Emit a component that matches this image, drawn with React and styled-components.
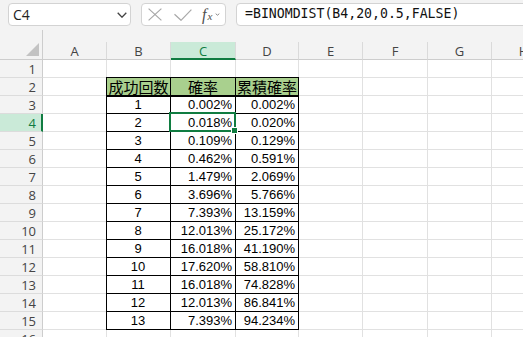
import React from "react";
import styled, { createGlobalStyle } from "styled-components";

const GlobalStyle = createGlobalStyle`
  html, body { margin: 0; padding: 0; overflow: hidden; background: #fff; }
  * { box-sizing: border-box; }
`;

const GREEN = "#107c41";
const SEL_BG = "#caead8";
const HEAD_BG = "#f3f3f3";
const GRID = "#e1e1e1";

const Window = styled.div`
  width: 523px;
  height: 337px;
  overflow: hidden;
  background: ${HEAD_BG};
  display: flex;
  flex-direction: column;
`;

const FormulaRow = styled.div`
  display: flex;
  align-items: flex-start;
  height: 30px;
  flex: 0 0 30px;
  padding: 3px 0 0 8px;
  gap: 10px;
`;

const Box = styled.div`
  height: 23px;
  background: #fff;
  border: 1px solid #d3d3d3;
  border-radius: 4px;
  display: flex;
  align-items: center;
`;

const NameBox = styled(Box)`
  width: 123px;
  flex: 0 0 123px;
  justify-content: space-between;
  padding: 0 3px 0 4px;
  font-family: "Open Sans", "Noto Sans", sans-serif;
  font-size: 14px;
  color: #222;
`;

const ToolBox = styled(Box)`
  width: 85px;
  flex: 0 0 85px;
  padding: 0 0 0 6px;
`;

const ToolIcon = styled.span`
  display: flex;
  align-items: center;
  margin-left: ${(p) => p.$gap || 0}px;
`;

const Fx = styled.span`
  display: flex;
  align-items: baseline;
  margin-left: 10px;
  font-family: "Liberation Serif", serif;
  font-style: italic;
  font-size: 16px;
  line-height: 16px;
  color: #505050;
  sub {
    font-size: 11px;
    vertical-align: -3px;
    line-height: 11px;
    margin-left: 1px;
  }
`;

const FormulaBox = styled(Box)`
  flex: 0 0 300px;
  padding: 0 0 0 8px;
  border-radius: 4px 0 0 4px;
  font-family: "DejaVu Sans Mono", "Liberation Mono", monospace;
  font-size: 13.2px;
  color: #111;
  padding-bottom: 3px;
`;

const Sheet = styled.div`
  display: grid;
  grid-template-columns: 43px 64px 64px 65px 63px 64px 65px 64px 64px;
  grid-template-rows: 30px;
  grid-auto-rows: 18px;
  width: 556px;
`;

const Corner = styled.div`
  background: ${HEAD_BG};
  border-right: 1px solid #cdcdcd;
  border-bottom: 1px solid #cdcdcd;
  display: flex;
  align-items: flex-end;
  justify-content: flex-end;
  padding: 0 3px 3px 0;
`;

const ColHead = styled.div`
  align-self: end;
  height: 18px;
  background: ${(p) => (p.$sel ? SEL_BG : HEAD_BG)};
  border-right: 1px solid #dadada;
  border-bottom: ${(p) => (p.$sel ? `2px solid ${GREEN}` : "1px solid #cdcdcd")};
  color: ${(p) => (p.$sel ? GREEN : "#444")};
  font-family: "Open Sans", "Noto Sans", sans-serif;
  font-size: 13px;
  display: flex;
  align-items: center;
  justify-content: center;
  padding-top: ${(p) => (p.$sel ? 1 : 0)}px;
`;

const RowHead = styled.div`
  background: ${(p) => (p.$sel ? SEL_BG : HEAD_BG)};
  border-right: ${(p) => (p.$sel ? `2px solid ${GREEN}` : "1px solid #cdcdcd")};
  border-bottom: 1px solid #dcdcdc;
  color: ${(p) => (p.$sel ? GREEN : "#444")};
  font-family: "Open Sans", "Noto Sans", sans-serif;
  font-size: 13px;
  display: flex;
  align-items: center;
  justify-content: flex-end;
  padding-right: ${(p) => (p.$sel ? 5 : 6)}px;
`;

const shadows = (p) => {
  const s = [];
  if (p.$left) s.push("-1px 0 0 #000");
  if (p.$top) s.push("0 -1px 0 #000");
  if (p.$left && p.$top) s.push("-1px -1px 0 #000");
  if (p.$afterHead) s.push("inset 0 1px 0 #000");
  return s.length ? `box-shadow: ${s.join(", ")};` : "";
};

const Cell = styled.div`
  position: ${(p) => (p.$selected ? "relative" : "static")};
  background: ${(p) => (p.$head ? "#a9d08e" : "#fff")};
  border-right: 1px solid ${(p) => (p.$boxed ? "#000" : GRID)};
  border-bottom: 1px solid ${(p) => (p.$boxed ? "#000" : GRID)};
  ${shadows}
  display: flex;
  align-items: center;
  justify-content: ${(p) => p.$align || "flex-start"};
  padding: 0 3px 0 2px;
  font-family: "Liberation Sans", "Noto Sans CJK JP", sans-serif;
  font-size: ${(p) => (p.$head ? "15px" : "13px")};
  color: #000;
  white-space: nowrap;
  overflow: visible;
  ${(p) => p.$head && `font-family: "Noto Sans CJK JP", sans-serif; padding: 0;`}
`;

const Selection = styled.div`
  position: absolute;
  top: -2px;
  left: -2px;
  right: -1px;
  bottom: -1px;
  border: 2px solid ${GREEN};
  z-index: 3;
  pointer-events: none;
`;

const Handle = styled.div`
  position: absolute;
  right: -4px;
  bottom: -4px;
  width: 7px;
  height: 7px;
  background: ${GREEN};
  border: 1px solid #fff;
`;

const COLS = ["A", "B", "C", "D", "E", "F", "G", "H"];

const DATA = [
  [1, "0.002%", "0.002%"],
  [2, "0.018%", "0.020%"],
  [3, "0.109%", "0.129%"],
  [4, "0.462%", "0.591%"],
  [5, "1.479%", "2.069%"],
  [6, "3.696%", "5.766%"],
  [7, "7.393%", "13.159%"],
  [8, "12.013%", "25.172%"],
  [9, "16.018%", "41.190%"],
  [10, "17.620%", "58.810%"],
  [11, "16.018%", "74.828%"],
  [12, "12.013%", "86.841%"],
  [13, "7.393%", "94.234%"],
];

const HEADERS = ["成功回数", "確率", "累積確率"];

function cellValue(r, ci) {
  if (ci < 1 || ci > 3) return "";
  if (r === 2) return HEADERS[ci - 1];
  if (r >= 3 && r <= 15) {
    const row = DATA[r - 3];
    return String(row[ci - 1]);
  }
  return "";
}

const Chevron = ({ w = 10, h = 6, color = "#444", sw = 1.3 }) => (
  <svg width={w} height={h} viewBox={`0 0 ${w} ${h}`}>
    <polyline
      points={`0.7,0.7 ${w / 2},${h - 0.8} ${w - 0.7},0.7`}
      fill="none"
      stroke={color}
      strokeWidth={sw}
    />
  </svg>
);

export default function App() {
  const rows = Array.from({ length: 16 }, (_, i) => i + 1);
  return (
    <Window>
      <GlobalStyle />
      <FormulaRow>
        <NameBox>
          <span>C4</span>
          <Chevron />
        </NameBox>
        <ToolBox>
          <ToolIcon>
            <svg width="14" height="13" viewBox="0 0 14 13">
              <path d="M0.6 0.6 L13.4 12.4 M13.4 0.6 L0.6 12.4" stroke="#a8a8a8" strokeWidth="1.2" fill="none" />
            </svg>
          </ToolIcon>
          <ToolIcon $gap={12}>
            <svg width="18" height="12" viewBox="0 0 18 12">
              <polyline points="0.5,5.2 7,11.3 17.4,0.6" stroke="#a8a8a8" strokeWidth="1.2" fill="none" />
            </svg>
          </ToolIcon>
          <Fx>
            f<sub>x</sub>
          </Fx>
          <ToolIcon $gap={3}>
            <Chevron w={5} h={3} color="#8a8a8a" sw={1} />
          </ToolIcon>
        </ToolBox>
        <FormulaBox>=BINOMDIST(B4,20,0.5,FALSE)</FormulaBox>
      </FormulaRow>
      <Sheet>
        <Corner>
          <svg width="13" height="13" viewBox="0 0 13 13">
            <polygon points="13,0 13,13 0,13" fill="#c3c3c3" />
          </svg>
        </Corner>
        {COLS.map((c) => (
          <ColHead key={c} $sel={c === "C"}>
            {c}
          </ColHead>
        ))}
        {rows.map((r) => (
          <React.Fragment key={r}>
            <RowHead $sel={r === 4}>{r}</RowHead>
            {COLS.map((c, ci) => {
              const boxed = r >= 2 && r <= 15 && ci >= 1 && ci <= 3;
              const selected = r === 4 && c === "C";
              return (
                <Cell
                  key={c}
                  $boxed={boxed}
                  $head={boxed && r === 2}
                  $left={boxed && ci === 1}
                  $top={boxed && r === 2}
                  $afterHead={boxed && r === 3}
                  $selected={selected}
                  $align={boxed ? (r === 2 || ci === 1 ? "center" : "flex-end") : "flex-start"}
                >
                  {cellValue(r, ci)}
                  {selected && (
                    <Selection>
                      <Handle />
                    </Selection>
                  )}
                </Cell>
              );
            })}
          </React.Fragment>
        ))}
      </Sheet>
    </Window>
  );
}
